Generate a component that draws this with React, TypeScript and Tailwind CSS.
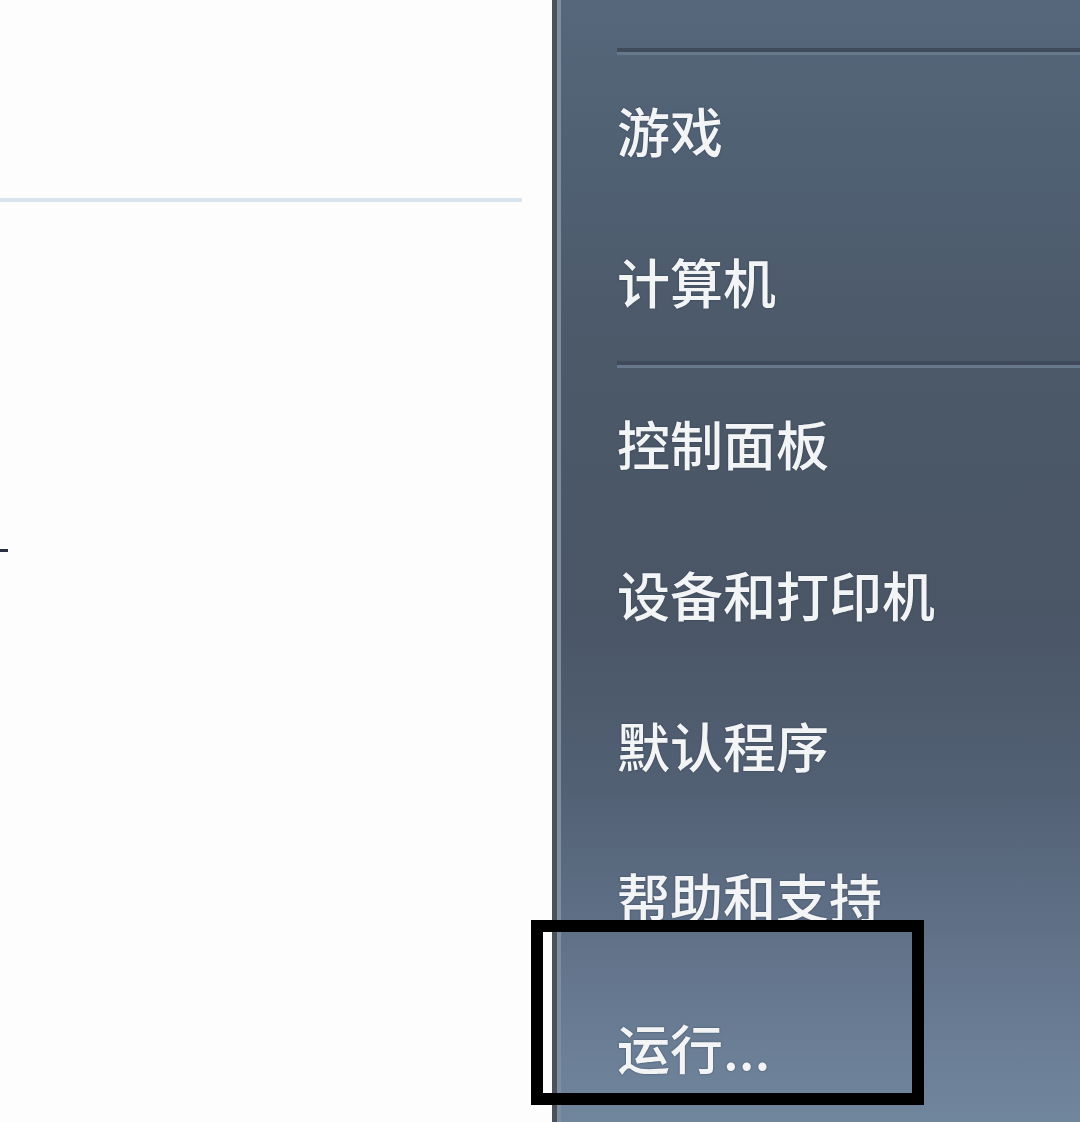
import React from "react";

const font = '"Noto Sans CJK SC", "Noto Sans", sans-serif';

function Sep() {
  return (
    <div className="ml-[65px] flex flex-col shrink-0">
      <div className="h-[4px] bg-[#3f4b5a]" />
      <div className="h-[3px] bg-[#68788c]" />
    </div>
  );
}

function Item({ label }: { label: string }) {
  return (
    <div className="h-[151px] shrink-0 flex items-center pl-[65px] pb-[6px]">
      <span
        className="text-[53px] leading-none font-medium text-[#f3f4f6] [text-shadow:0_0_2px_rgba(30,40,55,0.6)]"
        style={{ fontFamily: font }}
      >
        {label}
      </span>
    </div>
  );
}

export default function App() {
  return (
    <div className="relative w-[1080px] h-[1122px] overflow-hidden flex bg-[#fdfdfd]">
      {/* left white panel */}
      <div className="w-[552px] shrink-0 flex flex-col bg-[#fdfdfd]">
        <div className="h-[198px] shrink-0" />
        <div className="h-[4px] w-[522px] shrink-0 bg-[#d9e4f1]" />
        <div className="h-[347px] shrink-0" />
        <div className="h-[3px] w-[8px] shrink-0 bg-[#2a2f45]" />
      </div>
      {/* right start menu panel */}
      <div className="flex-1 flex h-[1122px]">
        <div className="w-[5px] bg-[#4b525c]" />
        <div className="w-[4px] bg-[#7d8ea2]" />
        <div className="flex-1 overflow-hidden bg-[linear-gradient(180deg,#57677b_0%,#506073_15%,#4c5969_30%,#4a5666_55%,#526074_70%,#62738a_85%,#6c8097_95%,#70869d_100%)]">
          <div className="-ml-[9px] flex flex-col">
            <div className="h-[48px] shrink-0" />
            <Sep />
            <div className="h-[3px] shrink-0" />
            <Item label="游戏" />
            <Item label="计算机" />
            <div className="h-[1px] shrink-0" />
            <Sep />
            <div className="h-[3px] shrink-0" />
            <Item label="控制面板" />
            <Item label="设备和打印机" />
            <Item label="默认程序" />
            <Item label="帮助和支持" />
            <Item label="运行..." />
          </div>
        </div>
      </div>
      {/* black highlight rectangle overlay */}
      <div className="absolute left-[531px] top-[920px] w-[393px] h-[185px] border-[12px] border-black" />
    </div>
  );
}
